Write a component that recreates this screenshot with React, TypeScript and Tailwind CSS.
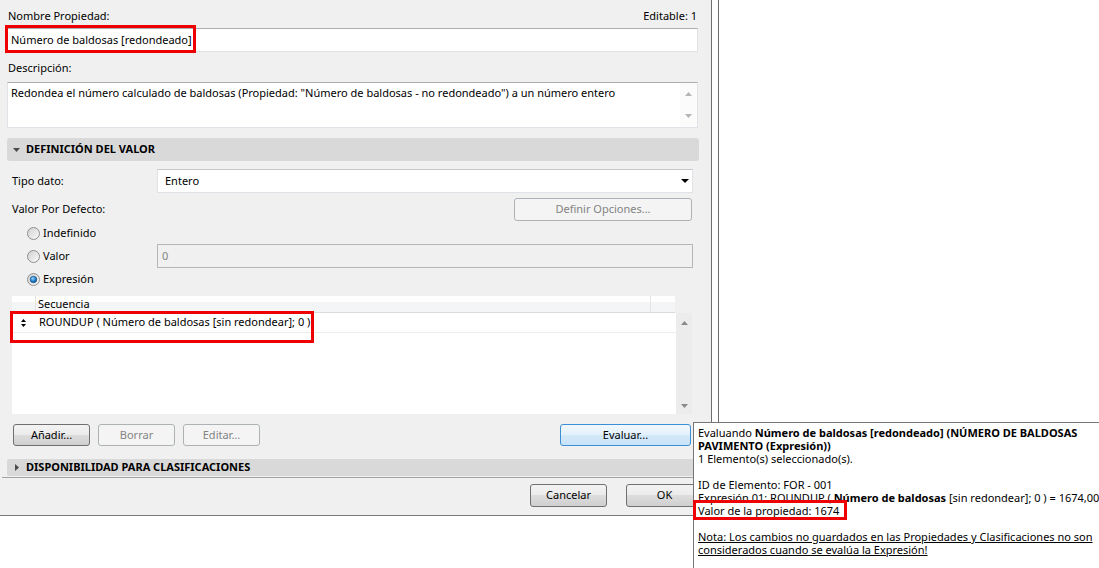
import React from "react";

const Tri = ({ dir, color = "#000", w = 7, h = 4 }: { dir: "up" | "down" | "right"; color?: string; w?: number; h?: number }) => {
  if (dir === "right")
    return (
      <svg width={h} height={w} viewBox={`0 0 ${h} ${w}`} className="block shrink-0">
        <polygon points={`0,0 ${h},${w / 2} 0,${w}`} fill={color} />
      </svg>
    );
  return (
    <svg width={w} height={h} viewBox={`0 0 ${w} ${h}`} className="block shrink-0">
      {dir === "down" ? (
        <polygon points={`0,0 ${w},0 ${w / 2},${h}`} fill={color} />
      ) : (
        <polygon points={`0,${h} ${w},${h} ${w / 2},0`} fill={color} />
      )}
    </svg>
  );
};

const Radio = ({ checked }: { checked?: boolean }) => (
  <svg width="13" height="13" viewBox="0 0 13 13" className="block shrink-0">
    <defs>
      <linearGradient id={checked ? "rgc" : "rgu"} x1="0" y1="0" x2="1" y2="1">
        <stop offset="0" stopColor="#cfcfcf" />
        <stop offset="1" stopColor="#fbfbfb" />
      </linearGradient>
      <radialGradient id="dot" cx="0.4" cy="0.35" r="0.7">
        <stop offset="0" stopColor="#9fd3f7" />
        <stop offset="0.5" stopColor="#2b8ad3" />
        <stop offset="1" stopColor="#0d4f8c" />
      </radialGradient>
    </defs>
    <circle cx="6.5" cy="6.5" r="6" fill={`url(#${checked ? "rgc" : "rgu"})`} stroke="#8e8f8f" strokeWidth="1" />
    {checked && <circle cx="6.5" cy="6.5" r="3.3" fill="url(#dot)" stroke="#14467a" strokeWidth="0.6" />}
  </svg>
);

const btnNormal =
  "h-full flex items-center justify-center rounded-[3px] border border-[#707070] bg-[linear-gradient(#f3f3f3_0%,#ebebeb_50%,#dddddd_50%,#cfcfcf_100%)] text-black";
const btnDisabled =
  "h-full flex items-center justify-center rounded-[3px] border border-[#adb2b5] bg-[#f4f4f4] text-[#838383]";

export default function App() {
  return (
    <div className="relative w-[1099px] h-[568px] overflow-hidden bg-white flex font-['Noto_Sans',sans-serif] text-[11px] text-black">
      {/* Dialog */}
      <div className="w-[712px] shrink-0 flex flex-col">
        <div className="h-[516px] bg-[#f0f0f0] border-r border-b border-r-[#6e6e6e] border-b-[#7a7a7a] flex flex-col pl-[7px] pr-[13px]">
          <div className="mt-[8px] h-[16px] flex items-center justify-between">
            <span className="pl-[1px]">Nombre Propiedad:</span>
            <span className="pr-[1px]">Editable: 1</span>
          </div>
          <div className="relative mt-[4px] h-[24px] bg-white border border-[#dfe3e8] border-t-[#abadb3] flex items-center pl-[3px]">
            Número de baldosas [redondeado]
            <div className="absolute left-[-3px] top-[-4px] w-[191px] h-[28px] border-[3px] border-[#ee0000]" />
          </div>
          <div className="mt-[8px] h-[16px] flex items-center pl-[1px]">Descripción:</div>
          <div className="mt-[6px] h-[46px] bg-white border border-[#dfe3e8] border-t-[#abadb3] flex">
            <div className="flex-1 pl-[3px] pt-[2px] leading-[16px]">
              Redondea el número calculado de baldosas (Propiedad: "Número de baldosas - no redondeado") a un número entero
            </div>
            <div className="w-[17px] flex flex-col items-center justify-between py-[9px] bg-[#fbfbfb]">
              <Tri dir="up" color="#b5b5b5" w={7} h={4} />
              <Tri dir="down" color="#b5b5b5" w={7} h={4} />
            </div>
          </div>

          {/* Section: Definición del valor */}
          <div className="mt-[10px] h-[23px] mr-[-1px] rounded-[3px] bg-[#d9d9d9] flex items-center pl-[6px]">
            <Tri dir="down" color="#4a4a4a" w={7} h={4} />
            <span className="ml-[6px] font-bold">DEFINICIÓN DEL VALOR</span>
          </div>

          <div className="pl-[5px] flex flex-col">
            <div className="mt-[8px] h-[24px] flex items-center">
              <span className="w-[145px]">Tipo dato:</span>
              <div className="w-[536px] h-full bg-white border border-[#dfe3e8] border-t-[#c4c7cc] flex items-center justify-between pl-[7px] pr-[3px]">
                <span>Entero</span>
                <Tri dir="down" color="#000" w={8} h={4} />
              </div>
            </div>
            <div className="mt-[5px] h-[23px] flex items-center justify-between">
              <span>Valor Por Defecto:</span>
              <div className={`${btnDisabled} w-[178px] mr-[6px]`}>Definir Opciones...</div>
            </div>
            <div className="mt-[3px] h-[18px] flex items-center pl-[15px]">
              <Radio />
              <span className="ml-[3px]">Indefinido</span>
            </div>
            <div className="mt-[2px] h-[24px] flex items-center">
              <div className="w-[145px] flex items-center pl-[15px]">
                <Radio />
                <span className="ml-[3px]">Valor</span>
              </div>
              <div className="w-[536px] h-full bg-[#f0f0f0] border border-[#b6b6b6] flex items-center pl-[4px] text-[#838383]">0</div>
            </div>
            <div className="mt-[2px] h-[18px] flex items-center pl-[15px]">
              <Radio checked />
              <span className="ml-[3px]">Expresión</span>
            </div>

            {/* Table */}
            <div className="mt-[8px] w-[680px] flex flex-col">
              <div className="h-[17px] w-[663px] flex bg-[linear-gradient(#ffffff_0%,#ffffff_35%,#f4f5f6_40%,#f4f5f6_100%)] border-b border-[#dcdcdc]">
                <div className="w-[24px] border-r border-[#e4e4e4]" />
                <div className="flex-1 pl-[2px] leading-[16px]">Secuencia</div>
                <div className="w-[25px] border-l border-[#e4e4e4]" />
              </div>
              <div className="h-[101px] flex">
                <div className="w-[664px] bg-white">
                  <div className="relative h-[20px] border-b border-[#ececec] flex items-center">
                    <div className="w-[27px] pl-[9px] flex flex-col gap-[2px]">
                      <Tri dir="up" color="#000" w={5} h={3} />
                      <Tri dir="down" color="#000" w={5} h={3} />
                    </div>
                    <span>ROUNDUP ( Número de baldosas [sin redondear]; 0 )</span>
                    <div className="absolute left-[-2px] top-[-2px] w-[304px] h-[32px] border-[3px] border-[#ee0000]" />
                  </div>
                </div>
                <div className="w-[16px] bg-[#ececec] flex flex-col items-center justify-between pt-[8px] pb-[6px]">
                  <Tri dir="up" color="#8a8a8a" w={7} h={4} />
                  <Tri dir="down" color="#8a8a8a" w={7} h={4} />
                </div>
              </div>
            </div>

            <div className="mt-[10px] h-[22px] flex items-center">
              <div className={`${btnNormal} ml-[1px] w-[77px]`}>Añadir...</div>
              <div className={`${btnDisabled} ml-[8px] w-[77px]`}>Borrar</div>
              <div className={`${btnDisabled} ml-[8px] w-[77px]`}>Editar...</div>
              <div className="ml-auto mr-[7px] w-[131px] h-full flex items-center justify-center rounded-[3px] border border-[#3c8fd6] bg-[linear-gradient(#f2f8fd_0%,#e3f1fb_50%,#d4eaf9_50%,#c8e3f7_100%)]">
                Evaluar...
              </div>
            </div>
          </div>

          {/* Section: Disponibilidad */}
          <div className="mt-[13px] h-[17px] mr-[-1px] rounded-[2px] bg-[#d9d9d9] flex items-center pl-[8px]">
            <Tri dir="right" color="#4a4a4a" w={7} h={4} />
            <span className="ml-[7px] font-bold">DISPONIBILIDAD PARA CLASIFICACIONES</span>
          </div>
          <div className="mt-[1px] h-px bg-[#a3a3a3] ml-[-5px] mr-[-13px]" />
          <div className="mt-[6px] h-[23px] flex justify-end mr-[-5px]">
            <div className={`${btnNormal} w-[77px]`}>Cancelar</div>
            <div className={`${btnNormal} ml-[19px] w-[77px]`}>OK</div>
          </div>
        </div>
      </div>
      <div className="w-[6px] shrink-0" />
      <div className="flex-1 border-l border-[#6e6e6e]" />

      {/* Tooltip */}
      <div className="absolute left-[693px] top-[422px] w-[420px] h-[170px] bg-white border border-[#767676] pl-[4px] pt-[3px] leading-[13px] whitespace-nowrap">
        <div>
          Evaluando <b>Número de baldosas [redondeado] (NÚMERO DE BALDOSAS</b>
        </div>
        <div>
          <b>PAVIMENTO (Expresión))</b>
        </div>
        <div>1 Elemento(s) seleccionado(s).</div>
        <div className="h-[13px]" />
        <div>ID de Elemento: FOR - 001</div>
        <div>
          Expresión 01: ROUNDUP ( <b>Número de baldosas</b> [sin redondear]; 0 ) = 1674,00
        </div>
        <div>Valor de la propiedad: 1674</div>
        <div className="h-[13px]" />
        <div className="underline">Nota: Los cambios no guardados en las Propiedades y Clasificaciones no son</div>
        <div className="underline">considerados cuando se evalúa la Expresión!</div>
        <div className="absolute left-[-1px] top-[77px] w-[154px] h-[20px] border-[3px] border-[#ee0000]" />
      </div>
    </div>
  );
}
